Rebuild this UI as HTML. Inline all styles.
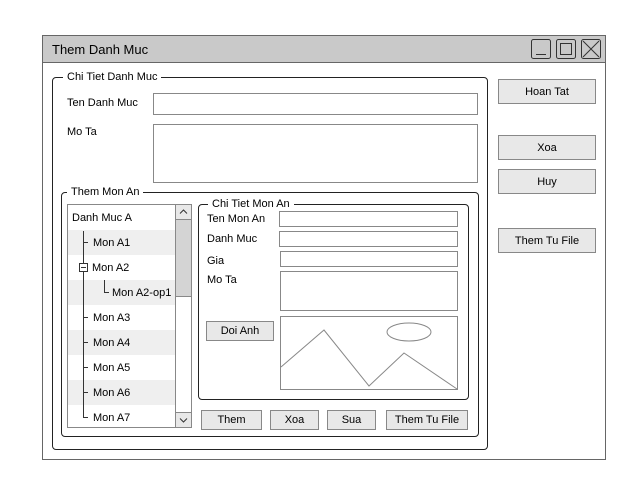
<!DOCTYPE html>
<html><head><style>
*{box-sizing:border-box;margin:0;padding:0}
body{width:640px;height:480px;background:#fff;position:relative;font-family:"Liberation Sans",sans-serif;font-size:11px;color:#000;overflow:hidden}
.a{position:absolute}
.t{position:absolute;line-height:14px;white-space:nowrap}
.in{position:absolute;border:1px solid #888;background:#fff}
.btn{position:absolute;border:1px solid #888;background:#e8e8e8;text-align:center;font-size:11px}
.grp{position:absolute;border:1px solid #222;border-radius:4px}
.lg{position:absolute;background:#fff;padding:0 4px;line-height:12px;white-space:nowrap}
</style></head><body>
<div class="a" style="left:42px;top:35px;width:564px;height:425px;border:1px solid #666"></div>
<div class="a" style="left:43px;top:36px;width:562px;height:27px;background:#c9c9c9;border-bottom:1px solid #666"></div>
<div class="t" style="left:52px;top:42px;font-size:13px;line-height:16px">Them Danh Muc</div>
<svg class="a" style="left:530px;top:38px" width="72" height="23">
<rect x="1.5" y="1.5" width="19" height="19" rx="2" fill="none" stroke="#333"/>
<line x1="6" y1="16.5" x2="16" y2="16.5" stroke="#333"/>
<rect x="26.5" y="1.5" width="19" height="19" rx="2" fill="none" stroke="#333"/>
<rect x="30.5" y="5.5" width="11" height="11" fill="none" stroke="#333"/>
<rect x="51.5" y="1.5" width="19" height="19" rx="2" fill="none" stroke="#333"/>
<path d="M53 3L69 19M69 3L53 19" stroke="#333"/>
</svg>

<div class="grp" style="left:52px;top:77px;width:436px;height:373px"></div>
<div class="lg" style="left:63px;top:71px">Chi Tiet Danh Muc</div>
<div class="t" style="left:67px;top:96px">Ten Danh Muc</div>
<div class="in" style="left:153px;top:93px;width:325px;height:22px"></div>
<div class="t" style="left:67px;top:125px">Mo Ta</div>
<div class="in" style="left:153px;top:124px;width:325px;height:59px"></div>

<div class="grp" style="left:61px;top:192px;width:418px;height:245px"></div>
<div class="lg" style="left:67px;top:186px">Them Mon An</div>

<div class="in" style="left:67px;top:204px;width:109px;height:224px;overflow:hidden">
<div class="a" style="left:0;top:25px;width:108px;height:25px;background:#efefef"></div>
<div class="a" style="left:0;top:75px;width:108px;height:25px;background:#efefef"></div>
<div class="a" style="left:0;top:125px;width:108px;height:25px;background:#efefef"></div>
<div class="a" style="left:0;top:175px;width:108px;height:25px;background:#efefef"></div>
<div class="a" style="left:15px;top:26px;width:1px;height:187px;background:#333"></div>
<div class="a" style="left:16px;top:37px;width:4px;height:1px;background:#333"></div>
<div class="a" style="left:16px;top:112px;width:4px;height:1px;background:#333"></div>
<div class="a" style="left:16px;top:137px;width:4px;height:1px;background:#333"></div>
<div class="a" style="left:16px;top:162px;width:4px;height:1px;background:#333"></div>
<div class="a" style="left:16px;top:187px;width:4px;height:1px;background:#333"></div>
<div class="a" style="left:16px;top:212px;width:4px;height:1px;background:#333"></div>
<div class="a" style="left:11px;top:58px;width:9px;height:9px;border:1px solid #333;background:#fff"></div>
<div class="a" style="left:13px;top:62px;width:5px;height:1px;background:#333"></div>
<div class="a" style="left:36px;top:75px;width:1px;height:12px;background:#333"></div>
<div class="a" style="left:36px;top:87px;width:5px;height:1px;background:#333"></div>
<div class="t" style="left:4px;top:6px">Danh Muc A</div>
<div class="t" style="left:25px;top:31px">Mon A1</div>
<div class="t" style="left:24px;top:56px">Mon A2</div>
<div class="t" style="left:44px;top:81px">Mon A2-op1</div>
<div class="t" style="left:25px;top:106px">Mon A3</div>
<div class="t" style="left:25px;top:131px">Mon A4</div>
<div class="t" style="left:25px;top:156px">Mon A5</div>
<div class="t" style="left:25px;top:181px">Mon A6</div>
<div class="t" style="left:25px;top:206px">Mon A7</div>
</div>
<div class="a" style="left:175px;top:204px;width:17px;height:224px;border:1px solid #888;background:#fff"></div>
<div class="a" style="left:175px;top:204px;width:17px;height:16px;border:1px solid #888;background:#e8e8e8"></div>
<svg class="a" style="left:175px;top:204px" width="17" height="16"><path d="M5 9.5L8.5 6L12 9.5" fill="none" stroke="#333"/></svg>
<div class="a" style="left:175px;top:219px;width:17px;height:78px;border:1px solid #888;background:#d4d4d4"></div>
<div class="a" style="left:175px;top:412px;width:17px;height:16px;border:1px solid #888;background:#e8e8e8"></div>
<svg class="a" style="left:175px;top:412px" width="17" height="16"><path d="M5 6.5L8.5 10L12 6.5" fill="none" stroke="#333"/></svg>

<div class="grp" style="left:198px;top:204px;width:271px;height:196px"></div>
<div class="lg" style="left:208px;top:198px">Chi Tiet Mon An</div>
<div class="t" style="left:207px;top:212px">Ten Mon An</div>
<div class="t" style="left:207px;top:232px">Danh Muc</div>
<div class="t" style="left:207px;top:254px">Gia</div>
<div class="t" style="left:207px;top:273px">Mo Ta</div>
<div class="in" style="left:279px;top:211px;width:179px;height:16px"></div>
<div class="in" style="left:279px;top:231px;width:179px;height:16px"></div>
<div class="in" style="left:280px;top:251px;width:178px;height:16px"></div>
<div class="in" style="left:280px;top:271px;width:178px;height:40px"></div>
<div class="btn" style="left:206px;top:321px;width:68px;height:20px;line-height:19px">Doi Anh</div>
<svg class="a" style="left:280px;top:316px" width="178" height="74">
<rect x="0.5" y="0.5" width="177" height="73" fill="#fff" stroke="#888"/>
<path d="M1 51L44 14L89 70L124 37L177 73" fill="none" stroke="#888"/>
<ellipse cx="129" cy="16" rx="22" ry="9" fill="none" stroke="#888"/>
</svg>
<div class="btn" style="left:201px;top:410px;width:61px;height:20px;line-height:19px">Them</div>
<div class="btn" style="left:270px;top:410px;width:49px;height:20px;line-height:19px">Xoa</div>
<div class="btn" style="left:327px;top:410px;width:49px;height:20px;line-height:19px">Sua</div>
<div class="btn" style="left:386px;top:410px;width:82px;height:20px;line-height:19px">Them Tu File</div>

<div class="btn" style="left:498px;top:79px;width:98px;height:25px;line-height:24px">Hoan Tat</div>
<div class="btn" style="left:498px;top:135px;width:98px;height:25px;line-height:24px">Xoa</div>
<div class="btn" style="left:498px;top:169px;width:98px;height:25px;line-height:24px">Huy</div>
<div class="btn" style="left:498px;top:228px;width:98px;height:25px;line-height:24px">Them Tu File</div>
</body></html>
